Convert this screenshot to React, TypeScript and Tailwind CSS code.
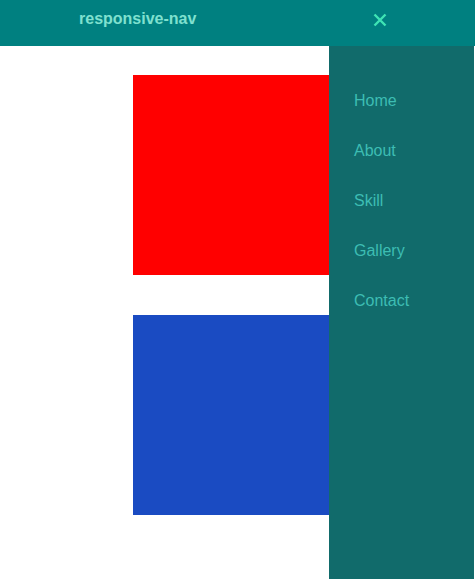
import React from "react"

const links = ["Home", "About", "Skill", "Gallery", "Contact"]

export default function App() {
	return (
		<div className="relative h-screen overflow-hidden bg-white" style={{ fontFamily: '"Liberation Sans", Arial, sans-serif' }}>
			<header className="flex h-[46px] items-center bg-[#008080]">
				<div className="pl-[79px] text-[16px] font-bold text-[#7fe0cf] leading-none pb-[9px]">responsive-nav</div>
				<button className="mb-[6px] ml-[177px] flex h-[14px] w-[14px] items-center justify-center">
					<svg width="14" height="14" viewBox="0 0 14 14" fill="none">
						<path d="M1.5 1.5 L12.5 12.5 M12.5 1.5 L1.5 12.5" stroke="#3fe3b4" strokeWidth="2.4" strokeLinecap="butt" />
					</svg>
				</button>
			</header>
			<main className="flex flex-col gap-[40px] pl-[133px] pt-[29px]">
				<div className="h-[200px] w-[200px] bg-[#ff0000]" />
				<div className="h-[200px] w-[200px] bg-[#1a4bc2]" />
			</main>
			<nav className="absolute bottom-0 right-[1px] top-[46px] w-[145px] bg-[#116b6b] pt-[30px]">
				<ul className="flex flex-col">
					{links.map((l) => (
						<li key={l} className="flex h-[50px] items-center pl-[25px] text-[16px] text-[#3dbdb3]">
							{l}
						</li>
					))}
				</ul>
			</nav>
		</div>
	)
}
